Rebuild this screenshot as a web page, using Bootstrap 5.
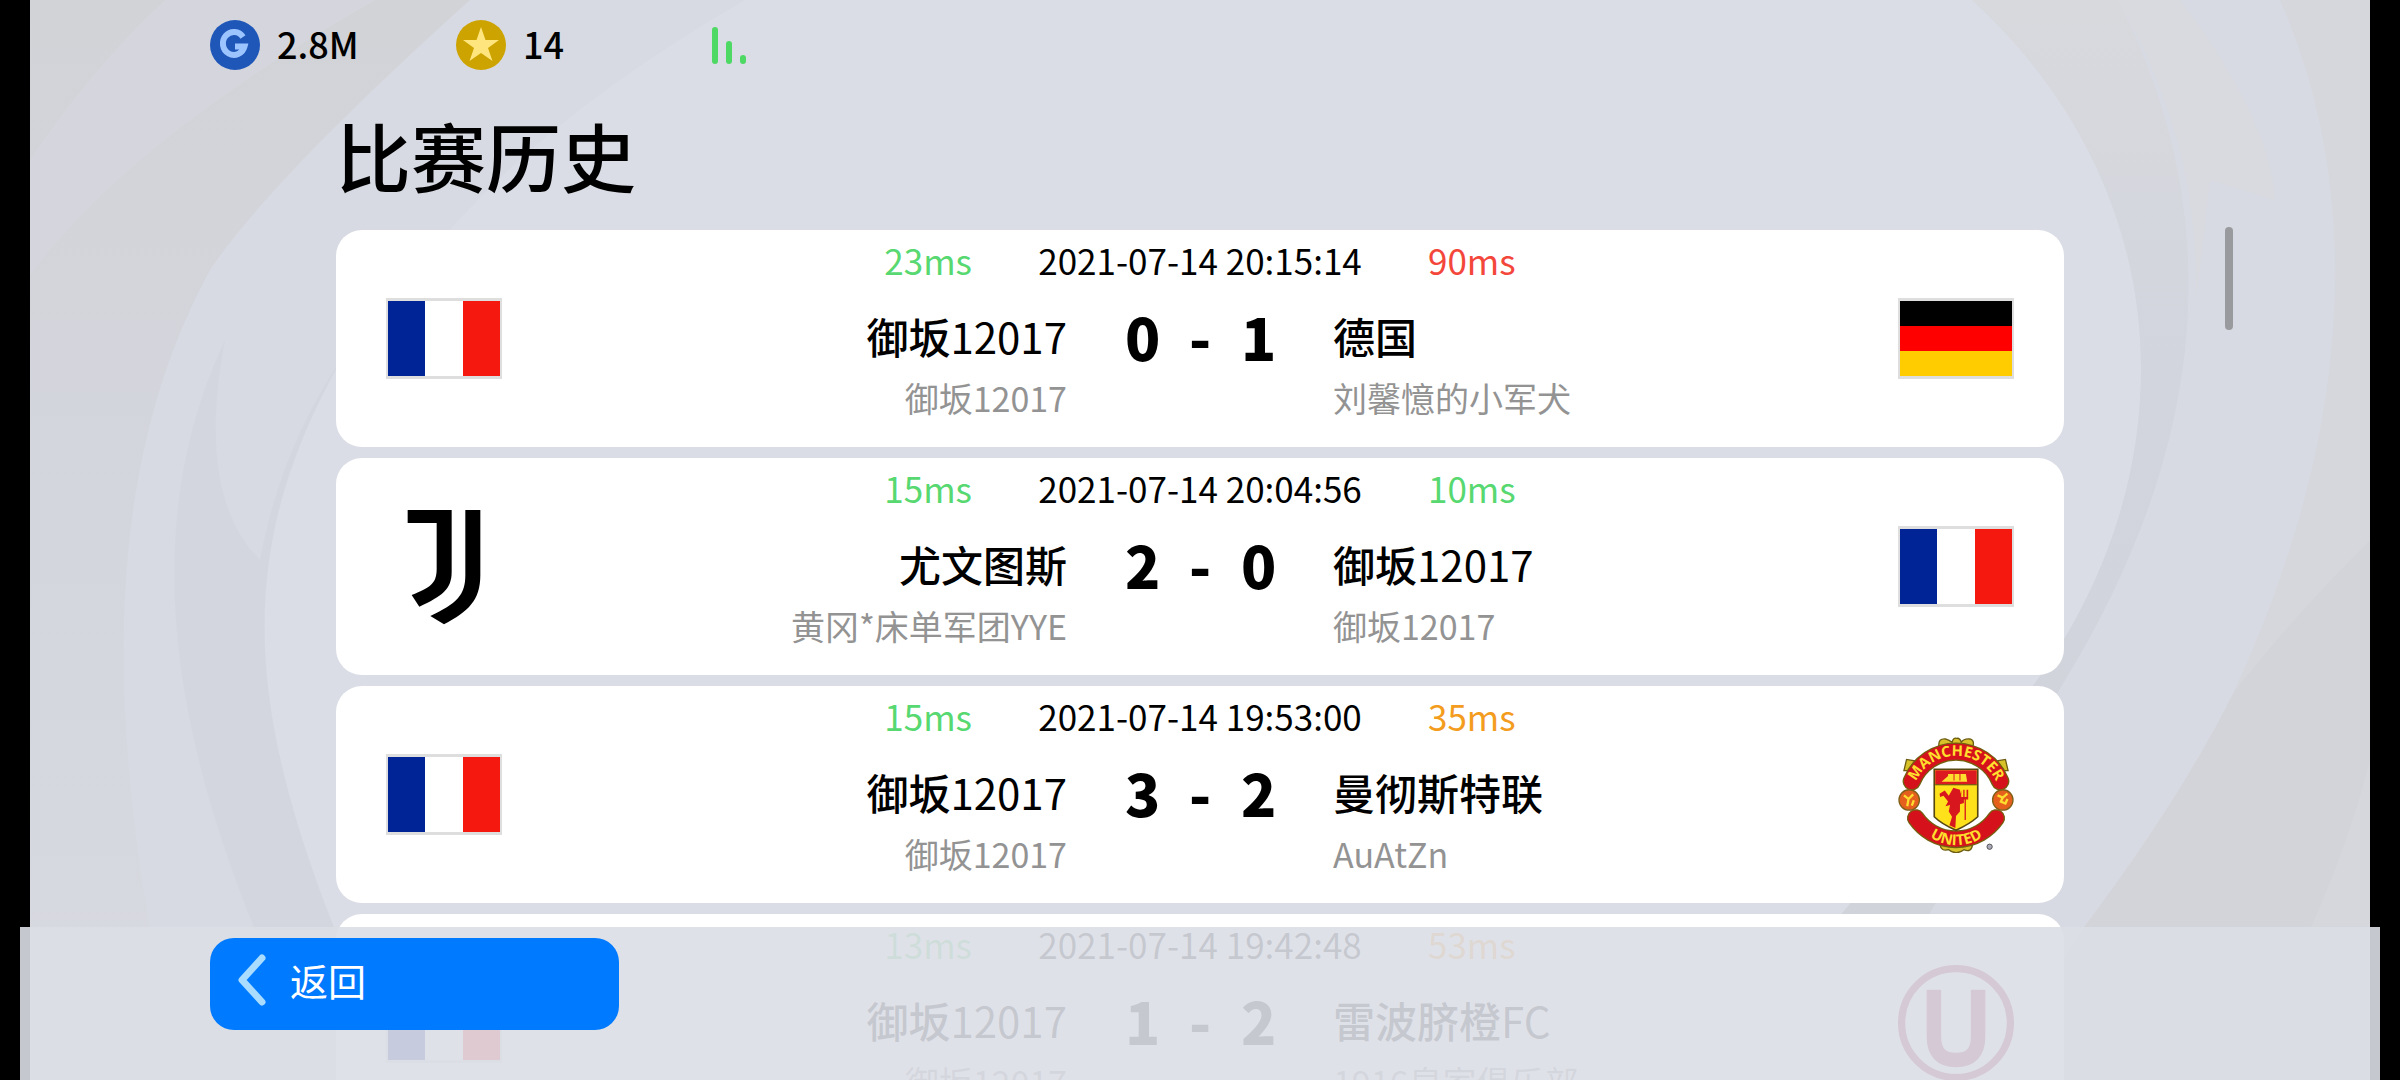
<!DOCTYPE html>
<html lang="zh-CN">
<head>
<meta charset="utf-8">
<meta name="viewport" content="width=device-width, initial-scale=1">
<title>比赛历史</title>
<link href="https://cdn.jsdelivr.net/npm/bootstrap@5.3.0/dist/css/bootstrap.min.css" rel="stylesheet">
<style>
body{background:#000;font-family:"Noto Sans CJK SC","Noto Sans",sans-serif;color:#000}
.stage{margin:0 30px;height:100vh;background:#dadde6}
.swirl{position:absolute;inset:0;width:100%;height:100%}
.topbar{height:90px;padding-left:180px;font-size:36px;line-height:46px;font-weight:500}
.topbar span{padding-bottom:5px}
.coin{width:50px;height:50px;flex:none}
.wallet{width:246px;gap:17px}
.signal{width:36px;height:37px;margin-left:10px}
.history{width:72vw}
.history-title{font-size:75px;line-height:75px;font-weight:500;padding:27px 0 38px}
.match{height:217px;border-radius:26px;padding:0 50px;margin-bottom:11px}
.crest{width:116px;height:116px;flex:none}
.flag{width:116px;height:81px;border:solid #dedede;border-width:3px 2px;flex:none}
.flag-fr{background:linear-gradient(90deg,#002396 33.33%,#fff 33.33% 66.66%,#f5180e 66.66%)}
.flag-de{background:linear-gradient(#000 33.33%,#f00 33.33% 66.66%,#fc0 66.66%)}
.info-line{display:grid;grid-template-columns:1fr 266px 1fr;align-items:center}
.times{display:grid;grid-template-columns:1fr 456px 1fr;font-size:35px;line-height:60px}
.names{font-size:42px;line-height:92px;font-weight:500}
.names i{font-style:normal;font-weight:400}
.points{font-size:58px;font-weight:700;display:grid;grid-template-columns:34px 1fr 34px;padding:0 58px;text-align:center}
.users{font-size:34px;line-height:32px;color:#939393}
.fast{color:#57d870}.mid{color:#f39c1e}.slow{color:#f4473c}
.thumb{position:absolute;left:2195px;top:227px;width:8px;height:103px;border-radius:4px;background:#999a9e}
.footbar{position:fixed;left:20px;right:20px;bottom:0;height:153px;background:rgba(219,222,230,.9);padding:11px 190px}
.back{width:409px;height:92px;border:0;border-radius:24px;background:#007aff;color:#fff;font-size:38px;line-height:54px;padding:0 0 8px 27px;gap:24px}
.back svg{width:29px;height:52px}
</style>
<script src="https://cdn.jsdelivr.net/npm/bootstrap@5.3.0/dist/js/bootstrap.bundle.min.js"></script>
</head>
<body class="overflow-hidden">
<div class="stage position-relative overflow-hidden">
  <svg class="swirl" viewBox="30 0 2340 1080" preserveAspectRatio="none" aria-hidden="true">
    <defs>
      <linearGradient id="ga" x1="0" y1="0" x2="0" y2="1"><stop offset="0" stop-color="#d2d3d7"/><stop offset=".5" stop-color="#d4d6de"/><stop offset="1" stop-color="#d8dae0"/></linearGradient>
      <linearGradient id="gb" x1="0" y1="0" x2="0" y2="1"><stop offset="0" stop-color="#d8d9dd"/><stop offset=".4" stop-color="#d2d5de"/><stop offset="1" stop-color="#d1d3da"/></linearGradient>
    </defs>
    <path fill="#d7dae2" d="M30 0H745Q555 110 450 230L341 360C240 540 240 690 335 930V1080H30Z"/>
    <path fill="url(#ga)" d="M30 0H470Q270 180 210 270C90 490 110 770 180 1080H30Z"/>
    <path fill="#d5d6dd" d="M165 0H375Q130 140 30 275V160Q90 70 165 0Z"/>
    <path fill="#d1d4dc" d="M341 360C240 540 240 690 335 930H255C170 720 140 520 225 340C200 470 230 530 260 560Q280 450 341 360Z" opacity=".6"/>
    <path fill="#d7dae2" d="M1972 0H2370V1080H1800L2035 683C2190 470 2180 190 1972 0Z"/>
    <path fill="url(#gb)" d="M1972 0H2118C2220 200 2220 430 2061 687L1920 930H1828L2035 683C2190 470 2180 190 1972 0Z"/>
    <path fill="#d9dadf" d="M2118 0H2180Q2270 120 2275 200L2210 180L2196 300Q2200 140 2118 0Z"/>
    <path fill="#d6d7dc" d="M2280 0H2370V1080H2000Q2050 980 2082 930Q2180 800 2234 692C2360 420 2360 180 2280 0Z"/>
    <path fill="#d3d4d9" d="M2370 540Q2290 620 2234 692Q2180 800 2082 930H2310Q2350 840 2370 760Z"/>
  </svg>

  <div class="position-relative">
    <header class="topbar d-flex align-items-center">
      <div class="wallet d-flex align-items-center">
        <svg class="coin" viewBox="0 0 50 50" aria-hidden="true"><circle cx="25" cy="25" r="25" fill="#1f57b8"/><path d="M33 17A11 11.500 0 1 0 34.500 26.500H25" fill="none" stroke="#9cc4ff" stroke-width="6"/></svg>
        <span>2.8M</span>
      </div>
      <div class="wallet d-flex align-items-center">
        <svg class="coin" viewBox="0 0 50 50" aria-hidden="true"><circle cx="25" cy="25" r="25" fill="#cda300"/><path d="M25 7L29.500 20H43L32 28L36.500 41L25 33L13.500 41L18 28L7 20H20.500Z" fill="#ffe57d"/></svg>
        <span>14</span>
      </div>
      <svg class="signal" viewBox="0 0 36 37" aria-hidden="true"><g fill="#4dd964"><rect width="6" height="37" rx="3"/><rect x="14" y="14" width="6" height="23" rx="3"/><rect x="28" y="28" width="6" height="9" rx="3"/></g></svg>
    </header>

    <main class="history mx-auto">
      <h1 class="history-title m-0">比赛历史</h1>

      <article class="match bg-white d-flex align-items-center">
        <div class="flag flag-fr"></div>
        <div class="flex-grow-1 align-self-start">
          <div class="times"><span class="text-end fast">23ms</span><time class="text-center">2021-07-14 20:15:14</time><span class="slow">90ms</span></div>
          <div class="info-line names"><span class="text-end">御坂<i>12017</i></span><span class="points"><b>0</b><b>-</b><b>1</b></span><span>德国</span></div>
          <div class="info-line users"><span class="text-end">御坂12017</span><span></span><span>刘馨憶的小军犬</span></div>
        </div>
        <div class="flag flag-de"></div>
      </article>

      <article class="match bg-white d-flex align-items-center">
        <svg class="crest" viewBox="168 146 348 348" aria-hidden="true"><path d="M233 149H365V335C365 388 335 408 268 439L245 404C302 380 320 370 320 325V188H233ZM406 149H451V345C451 420 415 454 342 492L301 467C380 430 406 405 406 345Z"/></svg>
        <div class="flex-grow-1 align-self-start">
          <div class="times"><span class="text-end fast">15ms</span><time class="text-center">2021-07-14 20:04:56</time><span class="fast">10ms</span></div>
          <div class="info-line names"><span class="text-end">尤文图斯</span><span class="points"><b>2</b><b>-</b><b>0</b></span><span>御坂<i>12017</i></span></div>
          <div class="info-line users"><span class="text-end">黄冈*床单军团YYE</span><span></span><span>御坂12017</span></div>
        </div>
        <div class="flag flag-fr"></div>
      </article>

      <article class="match bg-white d-flex align-items-center">
        <div class="flag flag-fr"></div>
        <div class="flex-grow-1 align-self-start">
          <div class="times"><span class="text-end fast">15ms</span><time class="text-center">2021-07-14 19:53:00</time><span class="mid">35ms</span></div>
          <div class="info-line names"><span class="text-end">御坂<i>12017</i></span><span class="points"><b>3</b><b>-</b><b>2</b></span><span>曼彻斯特联</span></div>
          <div class="info-line users"><span class="text-end">御坂12017</span><span></span><span>AuAtZn</span></div>
        </div>
        <svg class="crest" viewBox="112 108 352 352" aria-label="Manchester United">
          <defs><path id="arcTop" d="M160 262A133 133 0 0 1 416 262"/><path id="arcBot" d="M186 392A142 142 0 0 0 392 392"/></defs>
          <g fill="#d8c22a" stroke="#6d5d12" stroke-width="4">
            <path d="M236 134Q234 112 256 114Q268 118 276 124Q280 108 290 112Q300 110 304 124Q312 112 330 114Q344 118 340 134Z"/>
            <path d="M130 210L138 176L162 180L154 210ZM446 210L438 176L414 180L424 210Z"/>
            <path d="M240 436Q242 456 266 450Q288 468 312 450Q334 460 338 436Z"/>
          </g>
          <g fill="none" stroke-linecap="round">
            <path d="M154 242A145 145 0 0 1 422 242" stroke="#75600f" stroke-width="56"/>
            <path d="M154 242A145 145 0 0 1 422 242" stroke="#d5121b" stroke-width="48"/>
            <path d="M166 354A148 148 0 0 0 410 354" stroke="#75600f" stroke-width="54"/>
            <path d="M166 354A148 148 0 0 0 410 354" stroke="#d5121b" stroke-width="46"/>
          </g>
          <g fill="#e5601c" stroke="#806018" stroke-width="4"><circle cx="146" cy="299" r="31"/><circle cx="430" cy="299" r="31"/></g>
          <g fill="none" stroke="#ffdd2f" stroke-width="7"><path d="M130 285L144 296L158 282M144 296L140 318M160 300L154 316"/><path d="M414 285L430 292L444 280M430 292L424 304L438 310L444 296"/></g>
          <path d="M222 206H354V350Q330 372 288 391Q244 372 222 350Z" fill="#ffe11b" stroke="#574812" stroke-width="5"/>
          <path d="M225 209H351V252H225Z" fill="#dc1820"/>
          <path d="M244 244L264 226V220H318L322 244Z" fill="#ffdf2d"/>
          <path d="M282 220V240M300 220V240" stroke="#dc1820" stroke-width="3"/>
          <path d="M225 253H351" stroke="#574812" stroke-width="3"/>
          <path d="M238 280L254 270L266 286L280 262L300 268L304 290L312 292V308L300 312V334L288 348L286 384L268 376L276 350L266 334L270 314L256 318L264 304L250 286L240 290ZM304 268V290H310V268H314V290H320V268H325V298H318V360H314V298H300" fill="#d7161d"/>
          <g fill="#ffdf2d" font-family="'Open Sans',sans-serif" font-weight="700" font-size="45" text-anchor="middle">
            <text><textPath href="#arcTop" startOffset="50%">MANCHESTER</textPath></text>
            <text><textPath href="#arcBot" startOffset="50%">UNITED</textPath></text>
          </g>
          <circle cx="390" cy="441" r="8" fill="#aab" stroke="#555" stroke-width="3"/>
        </svg>
      </article>

      <article class="match bg-white d-flex align-items-center">
        <div class="flag flag-fr"></div>
        <div class="flex-grow-1 align-self-start">
          <div class="times"><span class="text-end fast">13ms</span><time class="text-center">2021-07-14 19:42:48</time><span class="mid">53ms</span></div>
          <div class="info-line names"><span class="text-end">御坂<i>12017</i></span><span class="points"><b>1</b><b>-</b><b>2</b></span><span>雷波脐橙<i>FC</i></span></div>
          <div class="info-line users"><span class="text-end">御坂12017</span><span></span><span>1916皇家俱乐部</span></div>
        </div>
        <svg class="crest" viewBox="112 792 352 352" aria-hidden="true"><g fill="none" stroke="#8f1238"><circle cx="288" cy="968" r="165" stroke-width="22"/><path d="M221 867V1010Q221 1080 288 1080Q355 1080 355 1010V867" stroke-width="44"/></g></svg>
      </article>
    </main>
    <div class="thumb"></div>
  </div>
</div>

<footer class="footbar">
  <button type="button" class="back d-flex align-items-center">
    <svg viewBox="0 0 29 52" aria-hidden="true"><path d="M25 4L5 26L25 48" fill="none" stroke="#a9dcff" stroke-width="7" stroke-linecap="round" stroke-linejoin="round"/></svg>
    <span>返回</span>
  </button>
</footer>
</body>
</html>
